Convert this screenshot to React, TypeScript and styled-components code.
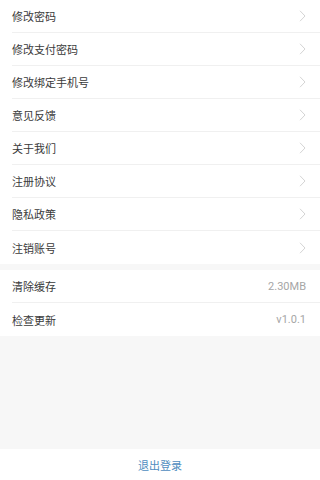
import styled, { createGlobalStyle } from "styled-components";

const GlobalStyle = createGlobalStyle`
  html, body {
    margin: 0;
    padding: 0;
    background: #f7f7f7;
  }
  * {
    box-sizing: border-box;
  }
`;

const Page = styled.div`
  width: 100%;
  height: 480px;
  display: flex;
  flex-direction: column;
  background: #f7f7f7;
  font-family: "Noto Sans CJK SC", "Noto Sans", sans-serif;
`;

const Group = styled.ul<{ $gap?: number }>`
  list-style: none;
  margin: 0 0 ${(p) => p.$gap ?? 0}px;
  padding: 0 0 0 12px;
  background: #fff;
`;

const Row = styled.li<{ $last?: boolean }>`
  height: 33px;
  display: flex;
  align-items: center;
  justify-content: space-between;
  padding-right: 14px;
  border-bottom: ${(p) => (p.$last ? "none" : "1px solid #f0f0f0")};
`;

const Label = styled.span`
  font-size: 11px;
  color: #3a3a3a;
`;

const Value = styled.span`
  font-size: 11px;
  color: #a6a6a6;
  font-family: "Roboto", "Noto Sans", sans-serif;
`;

const Spacer = styled.div`
  flex: 1;
`;

const Footer = styled.div`
  height: 31px;
  background: #fff;
  display: flex;
  align-items: center;
  justify-content: center;
  font-size: 11px;
  color: #4f8dc0;
`;

function Chevron() {
  return (
    <svg width="7" height="12" viewBox="0 0 7 12">
      <path d="M1 0.8 L6 6 L1 11.2" fill="none" stroke="#cfcfcf" strokeWidth="0.9" />
    </svg>
  );
}

const links = [
  "修改密码",
  "修改支付密码",
  "修改绑定手机号",
  "意见反馈",
  "关于我们",
  "注册协议",
  "隐私政策",
  "注销账号",
];

const infos = [
  { label: "清除缓存", value: "2.30MB" },
  { label: "检查更新", value: "v1.0.1" },
];

function App() {
  return (
    <Page>
      <GlobalStyle />
      <Group $gap={6}>
        {links.map((text, i) => (
          <Row key={text} $last={i === links.length - 1}>
            <Label>{text}</Label>
            <Chevron />
          </Row>
        ))}
      </Group>
      <Group>
        {infos.map((item, i) => (
          <Row key={item.label} $last={i === infos.length - 1}>
            <Label>{item.label}</Label>
            <Value>{item.value}</Value>
          </Row>
        ))}
      </Group>
      <Spacer />
      <Footer>退出登录</Footer>
    </Page>
  );
}

export default App;
